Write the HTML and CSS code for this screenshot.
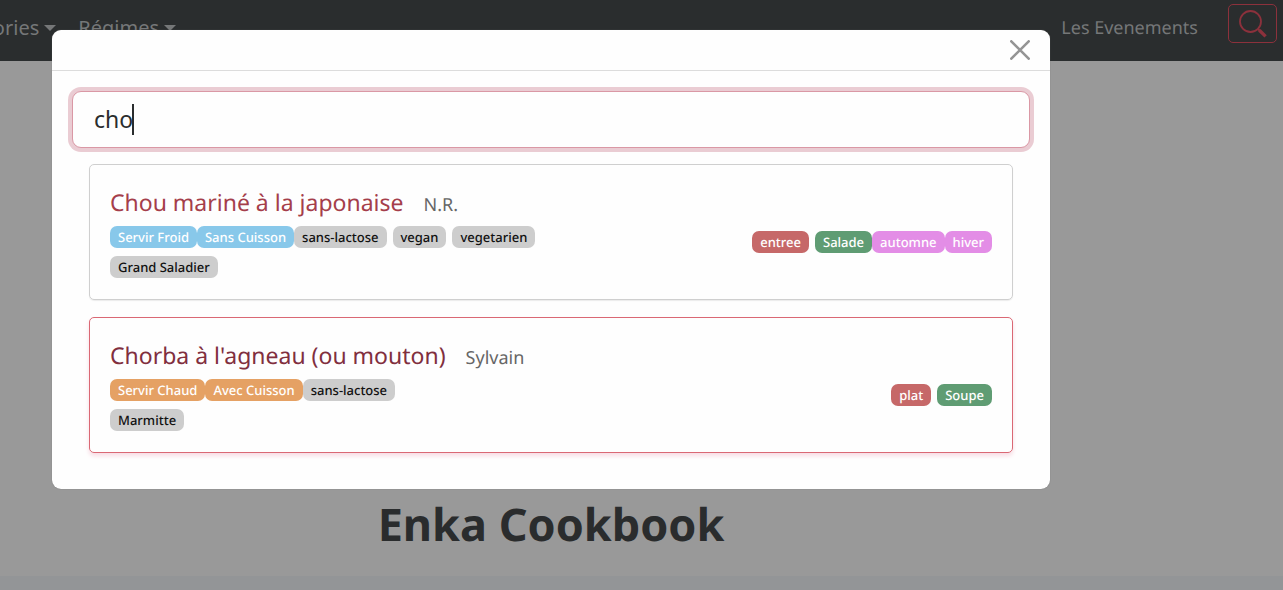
FILE: index.html
```html
<!DOCTYPE html>
<html lang="fr">
<head>
<meta charset="utf-8">
<meta name="viewport" content="width=device-width, initial-scale=1">
<title>Enka Cookbook</title>
<link rel="stylesheet" href="styles.css">
</head>
<body>
<header class="navbar">
  <nav class="menu">
    <button class="menu-item" type="button">Catégories<span class="caret"></span></button>
    <button class="menu-item" type="button">Régimes<span class="caret"></span></button>
  </nav>
  <div class="actions">
    <a class="nav-link" href="#">Les Evenements</a>
    <button class="search-button" type="button" aria-label="Rechercher">
      <svg viewBox="0 0 28 28" width="28" height="28" fill="none" stroke="currentColor">
        <circle cx="11.5" cy="11.5" r="10.5" stroke-width="1.8"/>
        <path d="M18.8 18.8 21 21" stroke-width="2"/>
        <path d="M20.3 20.3 26.6 26.4" stroke-width="3.4"/>
      </svg>
    </button>
  </div>
</header>
<main class="page">
  <h1 class="page-title">Enka Cookbook</h1>
  <div class="band"></div>
</main>
<div class="overlay">
  <section class="modal" role="dialog" aria-modal="true" aria-label="Recherche">
    <div class="modal-header">
      <button class="close" type="button" aria-label="Fermer">
        <svg viewBox="0 0 20 20" width="20" height="20" fill="none" stroke="currentColor" stroke-width="2.6" stroke-linecap="round"><path d="M1.3 1.3 18.7 18.7M18.7 1.3 1.3 18.7"/></svg>
      </button>
    </div>
    <div class="modal-body">
      <div class="field">
        <input class="search-input" type="text" value="cho" aria-label="Recherche" autofocus>
        <span class="text-cursor"></span>
      </div>
      <div class="results">
        <article class="card">
          <div class="info">
            <div class="heading"><a class="name" href="#">Chou mariné à la japonaise</a><span class="author">N.R.</span></div>
            <div class="tags">
              <span class="group"><span class="tag cold">Servir Froid</span><span class="tag cold">Sans Cuisson</span><span class="tag">sans-lactose</span></span>
              <span class="tag">vegan</span>
              <span class="tag">vegetarien</span>
            </div>
            <div class="tags"><span class="tag">Grand Saladier</span></div>
          </div>
          <div class="kinds">
            <span class="tag course">entree</span>
            <span class="group"><span class="tag type">Salade</span><span class="tag season">automne</span><span class="tag season">hiver</span></span>
          </div>
        </article>
        <article class="card active">
          <div class="info">
            <div class="heading"><a class="name" href="#">Chorba à l'agneau (ou mouton)</a><span class="author">Sylvain</span></div>
            <div class="tags">
              <span class="group"><span class="tag hot">Servir Chaud</span><span class="tag hot">Avec Cuisson</span><span class="tag">sans-lactose</span></span>
            </div>
            <div class="tags"><span class="tag">Marmitte</span></div>
          </div>
          <div class="kinds">
            <span class="tag course">plat</span>
            <span class="tag type">Soupe</span>
          </div>
        </article>
      </div>
    </div>
  </section>
</div>
</body>
</html>
```
FILE: styles.css
```css
* { box-sizing: border-box; }
body {
  margin: 0;
  min-height: 100vh;
  display: flex;
  flex-direction: column;
  overflow: hidden;
  background: #999;
  color: #2a2c2d;
  font-family: "Noto Sans", sans-serif;
  text-rendering: geometricPrecision;
}
button, input { font: inherit; }
button { background: none; border: 0; padding: 0; }
a { text-decoration: none; color: inherit; }
.navbar {
  display: flex;
  justify-content: space-between;
  align-items: flex-start;
  padding: 4px 6px 18px 0;
  background: #2a2d2e;
  color: #757778;
  font-size: 18px;
  line-height: 24px;
}
.menu {
  display: flex;
  justify-content: flex-end;
  gap: 22px;
  width: 176px;
  padding-top: 12px;
  overflow: hidden;
  font-size: 20px;
}
.menu-item { display: flex; align-items: center; gap: 5px; color: inherit; }
.caret { border: 6px solid transparent; border-top-color: currentColor; border-bottom: 0; }
.actions { display: flex; gap: 30px; }
.nav-link { padding-top: 12px; }
.search-button {
  display: flex;
  justify-content: center;
  width: 49px;
  padding: 5px 0 4px;
  border: 1px solid #8c313c;
  border-radius: 5px;
  color: #8c313c;
}
.page { flex: 1; display: flex; flex-direction: column; justify-content: flex-end; }
.page-title {
  margin: 0 181px 19px 0;
  text-align: center;
  font-size: 45px;
  line-height: 64px;
  font-weight: 700;
}
.band { height: 14px; background: #939597; }
.overlay { position: absolute; inset: 0; padding: 30px 233px 0 52px; }
.modal {
  background: #fefefe;
  border-radius: 9px;
  box-shadow: 0 0 1px #666;
}
.modal-header {
  display: flex;
  justify-content: flex-end;
  padding: 10px 20px;
  border-bottom: 1px solid #dcdcdc;
}
.close { display: flex; color: #949494; }
.modal-body { padding: 20px 20px 36px; }
.field { position: relative; }
.search-input {
  display: block;
  width: 100%;
  height: 57px;
  padding: 0 21px 2px;
  border: 1px solid #da98a5;
  border-radius: 9px;
  outline: 0;
  box-shadow: 0 0 0 4px #eaccd3;
  background: #fefefe;
  color: #2a2d2e;
  caret-color: transparent;
  font-size: 23px;
}
.text-cursor {
  position: absolute;
  top: 13px;
  left: 60px;
  width: 2px;
  height: 31px;
  background: #2a2d2e;
}
.results { display: flex; flex-direction: column; gap: 17px; padding: 16px 17px 0; }
.card {
  display: flex;
  justify-content: space-between;
  align-items: center;
  padding: 20px 20px 21px;
  border: 1px solid #cfcfcf;
  border-radius: 5px;
  box-shadow: 0 1px 1px #ececec;
}
.card.active { border-color: #da6874; box-shadow: 0 3px 4px #f8dce4; }
.info { display: flex; flex-direction: column; gap: 8px; }
.heading { display: flex; align-items: baseline; gap: 20px; margin-bottom: -5px; line-height: 35px; }
.name { font-size: 23px; color: #a53e4b; }
.active .name { color: #812f3e; }
.author { font-size: 18px; color: #666; }
.tags, .kinds { display: flex; gap: 6px; }
.kinds { padding-top: 20px; }
.group { display: flex; }
.tag {
  padding: 0 8px;
  border-radius: 7px;
  background: #cdcdcd;
  color: #111;
  font-size: 13px;
  line-height: 22px;
  font-weight: 500;
}
.cold { background: #88c8ea; color: #fff; }
.hot { background: #e5a164; color: #fff; }
.course { background: #c66868; color: #fff; }
.type { background: #5f9c73; color: #fff; }
.season { background: #e38de6; color: #fff; }
```
